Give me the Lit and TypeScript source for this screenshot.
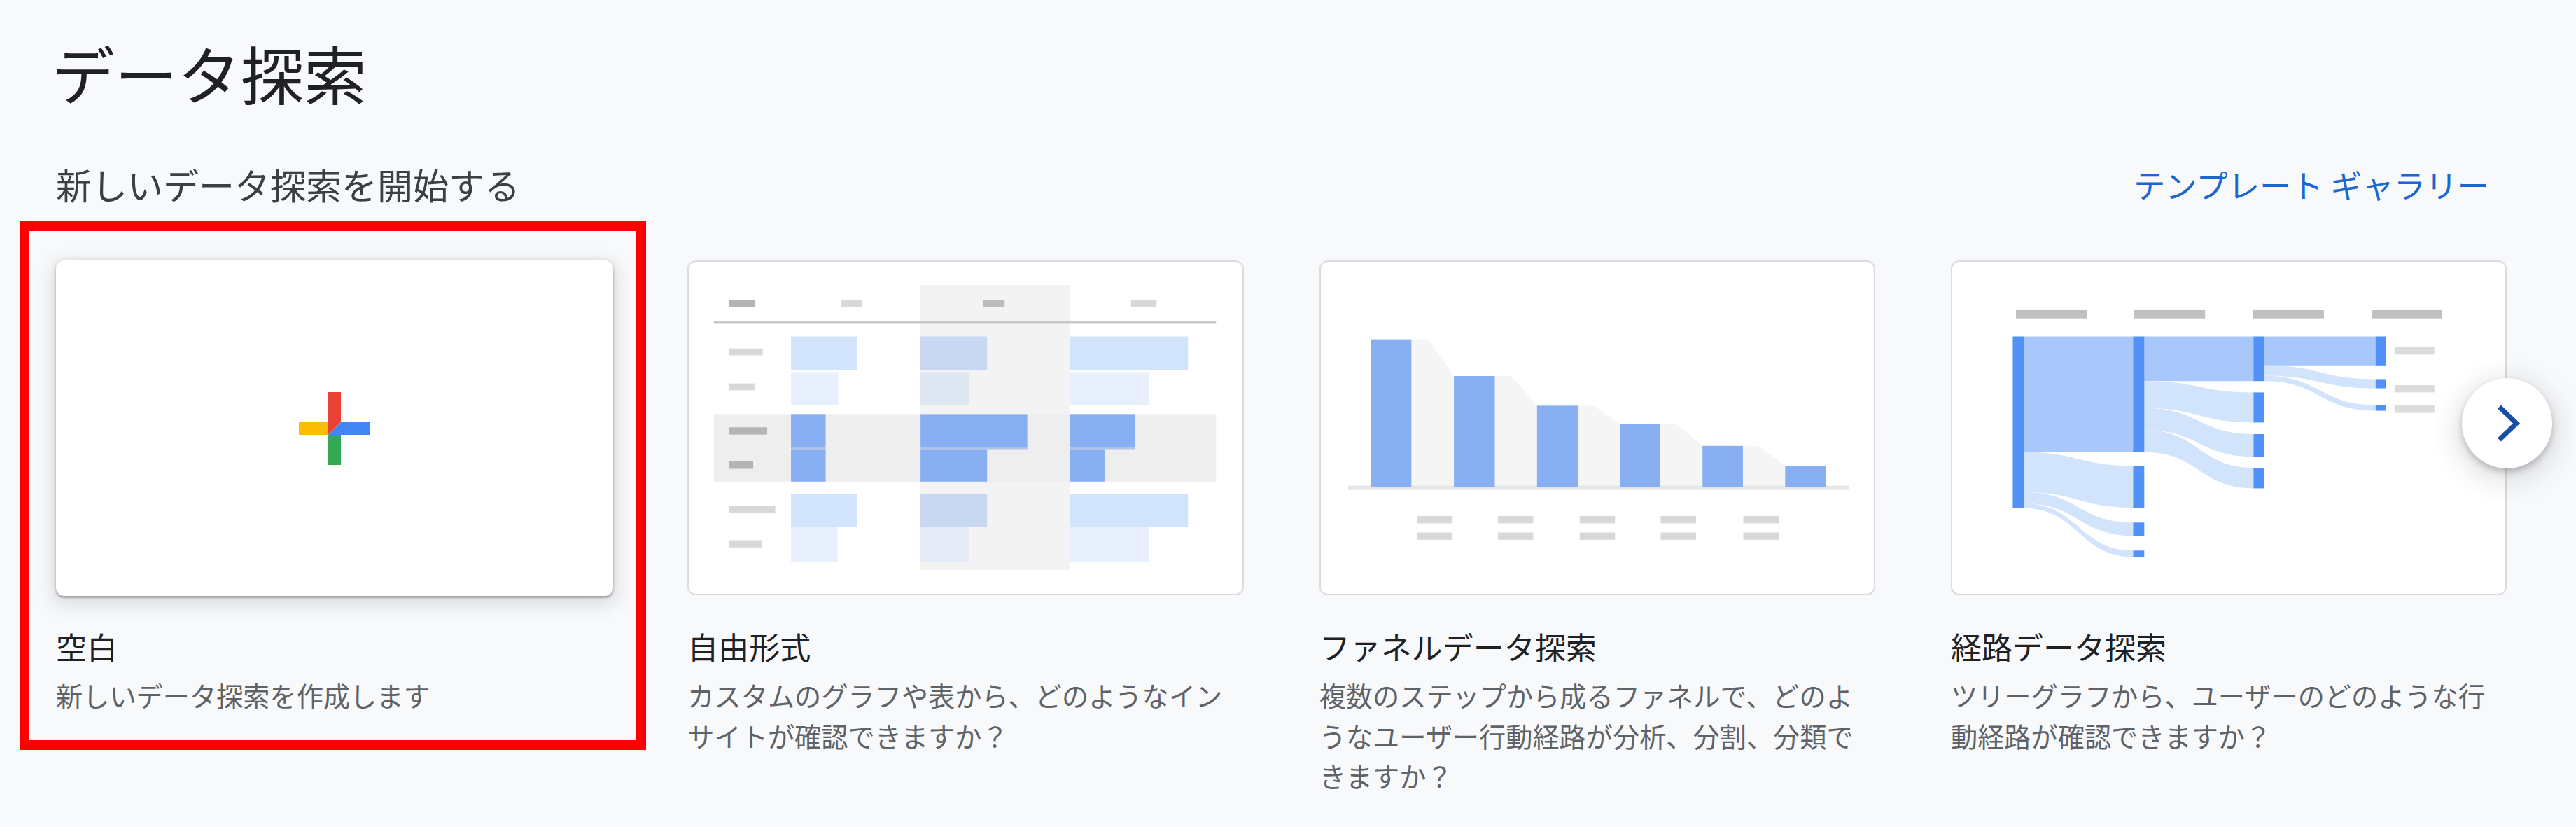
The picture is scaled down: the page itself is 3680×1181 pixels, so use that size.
import { LitElement, html, css, svg } from "lit";
import { customElement } from "lit/decorators.js";

type R = [number, number, number, number, string];
const rects = (items: R[]) =>
  items.map(([x0, y0, x1, y1, fill]) => svg`<rect x=${x0} y=${y0} width=${x1 - x0} height=${y1 - y0} fill=${fill}></rect>`);

const LB = "#d2e3fc", LB2 = "#e8f0fe", CB = "#c8d8f2", CB2 = "#dfe7f3", BL = "#87aff2", G1 = "#d8d8d8", G2 = "#b4b4b4";

const tableArt = svg`
  ${rects([
    [333, 34, 546, 441, "#f3f3f3"],
    [38, 218.4, 755, 314.8, "#eeeeee"],
    [38, 85, 755, 88.5, "#c8c8c8"],
    [59, 56, 97, 66, G2], [219, 56, 250, 66, G1], [422, 56, 453, 66, "#bcbcbc"], [633.5, 56, 670, 66, G1],
    [59, 124.7, 107.5, 134.4, G1], [59, 174.6, 97, 184.3, G1], [59, 237.3, 114, 247.6, G2],
    [59, 286, 94, 296.5, G2], [59, 349, 125.5, 359, G1], [59, 398.5, 106.5, 408.8, G1],
    [148, 107.5, 242, 155.7, LB], [333, 107.5, 428, 155.7, CB], [546, 107.5, 715, 155.7, LB],
    [148, 158.5, 215.5, 206, LB2], [333, 158.5, 402, 206, CB2], [546, 158.5, 659, 206, LB2],
    [148, 218.4, 197.5, 265.5, BL], [333, 218.4, 485.4, 265.5, BL], [546, 218.4, 639.5, 265.5, BL],
    [148, 265.5, 197.5, 268.5, "#b0c4e8"], [333, 265.5, 485.4, 268.5, "#b0c4e8"], [546, 265.5, 639.5, 268.5, "#b0c4e8"],
    [148, 268.5, 197.5, 314.8, BL], [333, 268.5, 428, 314.8, BL], [546, 268.5, 595.7, 314.8, BL],
    [148, 332.7, 242, 379.5, LB], [333, 332.7, 428, 379.5, CB], [546, 332.7, 715, 379.5, LB],
    [148, 380, 214.5, 429, LB2], [333, 380, 402, 429, "#e4ebf6"], [546, 380, 659, 429, LB2],
  ])}`;

const funnelBars: [number, number, number, number, number][] = [
  [73.7, 131.3, 111.6, 155, 192],
  [192, 250.4, 164, 274, 310.7],
  [310.7, 369, 206.3, 392, 429.2],
  [429.2, 486.8, 232.8, 510, 547],
  [547, 604.7, 263.8, 627.8, 665],
  [665, 722.7, 292.4, 0, 0],
];
const labelXs = [139.6, 254.8, 371.6, 487.3, 605.3];
const funnelArt = svg`
  ${funnelBars.map(([, r, top, knee, nextL], i) => {
    if (!knee) return svg``;
    const nextTop = funnelBars[i + 1][2];
    return svg`<polygon fill="#f5f5f5" points="${r},${top} ${knee},${top} ${nextL},${nextTop} ${nextL},322 ${r},322"></polygon>`;
  })}
  ${rects([[41, 320.6, 756, 326.8, "#e6e6e6"]])}
  ${rects(funnelBars.map(([l, r, top]) => [l, top, r, 322, BL] as R))}
  ${rects(labelXs.map((x) => [x, 364, x + 50.5, 374.4, G1] as R))}
  ${rects(labelXs.map((x) => [x, 387.5, x + 50.5, 397.8, G1] as R))}`;

const flow = (x0: number, x1: number, a0: number, a1: number, b0: number, b1: number) => {
  const m = (x0 + x1) / 2;
  return svg`<path fill="#d2e3fc" d="M${x0} ${a0}C${m} ${a0} ${m} ${b0} ${x1} ${b0}L${x1} ${b1}C${m} ${b1} ${m} ${a1} ${x0} ${a1}Z"></path>`;
};
const NODE = "#5291f8", STRONG = "#a8c7fa";
const pathArt = svg`
  ${rects([
    [93, 69.3, 194.7, 81.7, "#c0c0c0"], [262, 69.3, 363, 81.7, "#c0c0c0"],
    [431.7, 69.3, 532.7, 81.7, "#c0c0c0"], [600.8, 69.3, 701.7, 81.7, "#c0c0c0"],
    [633.6, 122, 690.5, 133.3, "#dcdcdc"], [633.6, 177, 690.5, 187.4, "#dcdcdc"], [633.6, 205.6, 690.5, 216.6, "#dcdcdc"],
    [104, 107.5, 261, 272.8, STRONG], [276, 107.5, 433, 171.2, STRONG], [447, 107.5, 607, 148.8, STRONG],
  ])}
  ${flow(104, 261, 272.8, 330, 292.4, 352)}
  ${flow(104, 261, 330, 346, 373.3, 392.3)}
  ${flow(104, 261, 346, 352.7, 413.3, 422.6)}
  ${flow(276, 433, 171.2, 209.8, 187.4, 230.4)}
  ${flow(276, 433, 209.8, 241, 247, 279.3)}
  ${flow(276, 433, 241, 272.8, 295.2, 324.4)}
  ${flow(447, 607, 148.8, 163.5, 168.4, 181.5)}
  ${flow(447, 607, 163.5, 171.2, 205.6, 213.6)}
  ${rects([
    [88.4, 107.5, 104.3, 352.7, NODE],
    [260.4, 107.5, 276.2, 272.8, NODE], [260.4, 292.4, 276.2, 352, NODE], [260.4, 373.3, 276.2, 392.3, NODE], [260.4, 413.3, 276.2, 422.6, NODE],
    [432.3, 107.5, 447.6, 171.2, NODE], [432.3, 187.4, 447.6, 230.4, NODE], [432.3, 247, 447.6, 279.3, NODE], [432.3, 295.2, 447.6, 324.4, NODE],
    [606.6, 107.5, 621.3, 148.8, NODE], [606.6, 168.4, 621.3, 181.5, NODE], [606.6, 205.6, 621.3, 213.6, NODE],
  ])}`;

const items = [
  { title: "自由形式", desc: "カスタムのグラフや表から、どのようなインサイトが確認できますか？", art: tableArt },
  { title: "ファネルデータ探索", desc: "複数のステップから成るファネルで、どのようなユーザー行動経路が分析、分割、分類できますか？", art: funnelArt },
  { title: "経路データ探索", desc: "ツリーグラフから、ユーザーのどのような行動経路が確認できますか？", art: pathArt },
];

@customElement("app-root")
export class AppRoot extends LitElement {
  static styles = css`
    :host {
      display: block;
      position: relative;
      width: 3680px;
      height: 1181px;
      overflow: hidden;
      background: #f8f9fb;
      font-family: "Noto Sans CJK JP", "Noto Sans", sans-serif;
      color: #202124;
    }
    .page { padding: 51px 0 0 80px; }
    h1 { margin: 0 0 0 -6px; font-size: 90px; line-height: 104px; font-weight: 400; color: #202124; }
    .bar {
      display: flex; justify-content: space-between; align-items: center;
      margin-top: 76px; height: 64px; padding-right: 124px;
    }
    h2 { margin: 0; font-size: 51px; line-height: 64px; font-weight: 400; color: #3c4043; }
    .link { font-size: 45.4px; line-height: 64px; color: #1a67d2; font-weight: 400; }
    .row {
      display: grid; grid-template-columns: repeat(4, 794.33px); column-gap: 108px;
      margin-top: 77px;
    }
    .item { position: relative; }
    .thumb {
      display: block; box-sizing: border-box; width: 100%; height: 478px;
      background: #fff; border-radius: 12px; box-shadow: inset 0 0 0 2px #dadce0;
    }
    .art { display: block; width: 100%; height: 100%; filter: blur(0.6px); }
    .blank {
      width: 796px; height: 479px;
      display: flex; align-items: center; justify-content: center;
      box-shadow: 0 3px 3px rgba(60, 64, 67, 0.32), 0 8px 24px 6px rgba(60, 64, 67, 0.14), 0 0 6px rgba(60, 64, 67, 0.16);
    }
    .blank + .title { margin-top: 42px; }
    .plus { width: 102px; height: 104px; display: block; filter: blur(0.6px); }
    .title { margin: 43px 0 0; font-size: 44px; line-height: 60px; font-weight: 400; color: #202124; }
    .desc { margin: 11px 0 0; font-size: 38.2px; line-height: 57.5px; font-weight: 400; color: #5f6368; }
    .highlight {
      position: absolute; left: -52px; top: -56px; width: 895px; height: 755px;
      box-sizing: border-box; border: 14px solid #ff0000; pointer-events: none;
    }
    .next {
      position: absolute; left: 3517px; top: 540px; width: 129px; height: 129px;
      border-radius: 50%; background: #fff; border: 0; padding: 0;
      display: flex; align-items: center; justify-content: center;
      box-shadow: 0 5px 8px rgba(60, 64, 67, 0.28), 0 10px 36px 8px rgba(60, 64, 67, 0.16);
    }
    .next svg { display: block; width: 129px; height: 129px; }
  `;

  render() {
    return html`
      <div class="page">
        <h1>データ探索</h1>
        <div class="bar">
          <h2>新しいデータ探索を開始する</h2>
          <span class="link">テンプレート ギャラリー</span>
        </div>
        <div class="row">
          <div class="item">
            <div class="thumb blank">
              <svg class="plus" viewBox="0 0 102 104">
                <rect x="0" y="43" width="42" height="18" fill="#fbbc04"></rect>
                <rect x="42" y="61" width="18" height="43" fill="#34a853"></rect>
                <polygon points="42,0 60,0 60,43 42,61" fill="#ea4335"></polygon>
                <polygon points="60,43 102,43 102,61 42,61" fill="#4285f4"></polygon>
              </svg>
            </div>
            <p class="title">空白</p>
            <p class="desc">新しいデータ探索を作成します</p>
            <div class="highlight"></div>
          </div>
          ${items.map(
            (it) => html`
              <div class="item">
                <div class="thumb"><svg class="art" viewBox="0 -1 794 478" preserveAspectRatio="none">${it.art}</svg></div>
                <p class="title">${it.title}</p>
                <p class="desc">${it.desc}</p>
              </div>
            `
          )}
        </div>
      </div>
      <button class="next" aria-label="次へ">
        <svg viewBox="0 0 129 129"><polyline points="53.5,41 78,64.5 53.5,88" fill="none" stroke="#174ea6" stroke-width="7"></polyline></svg>
      </button>
    `;
  }
}
